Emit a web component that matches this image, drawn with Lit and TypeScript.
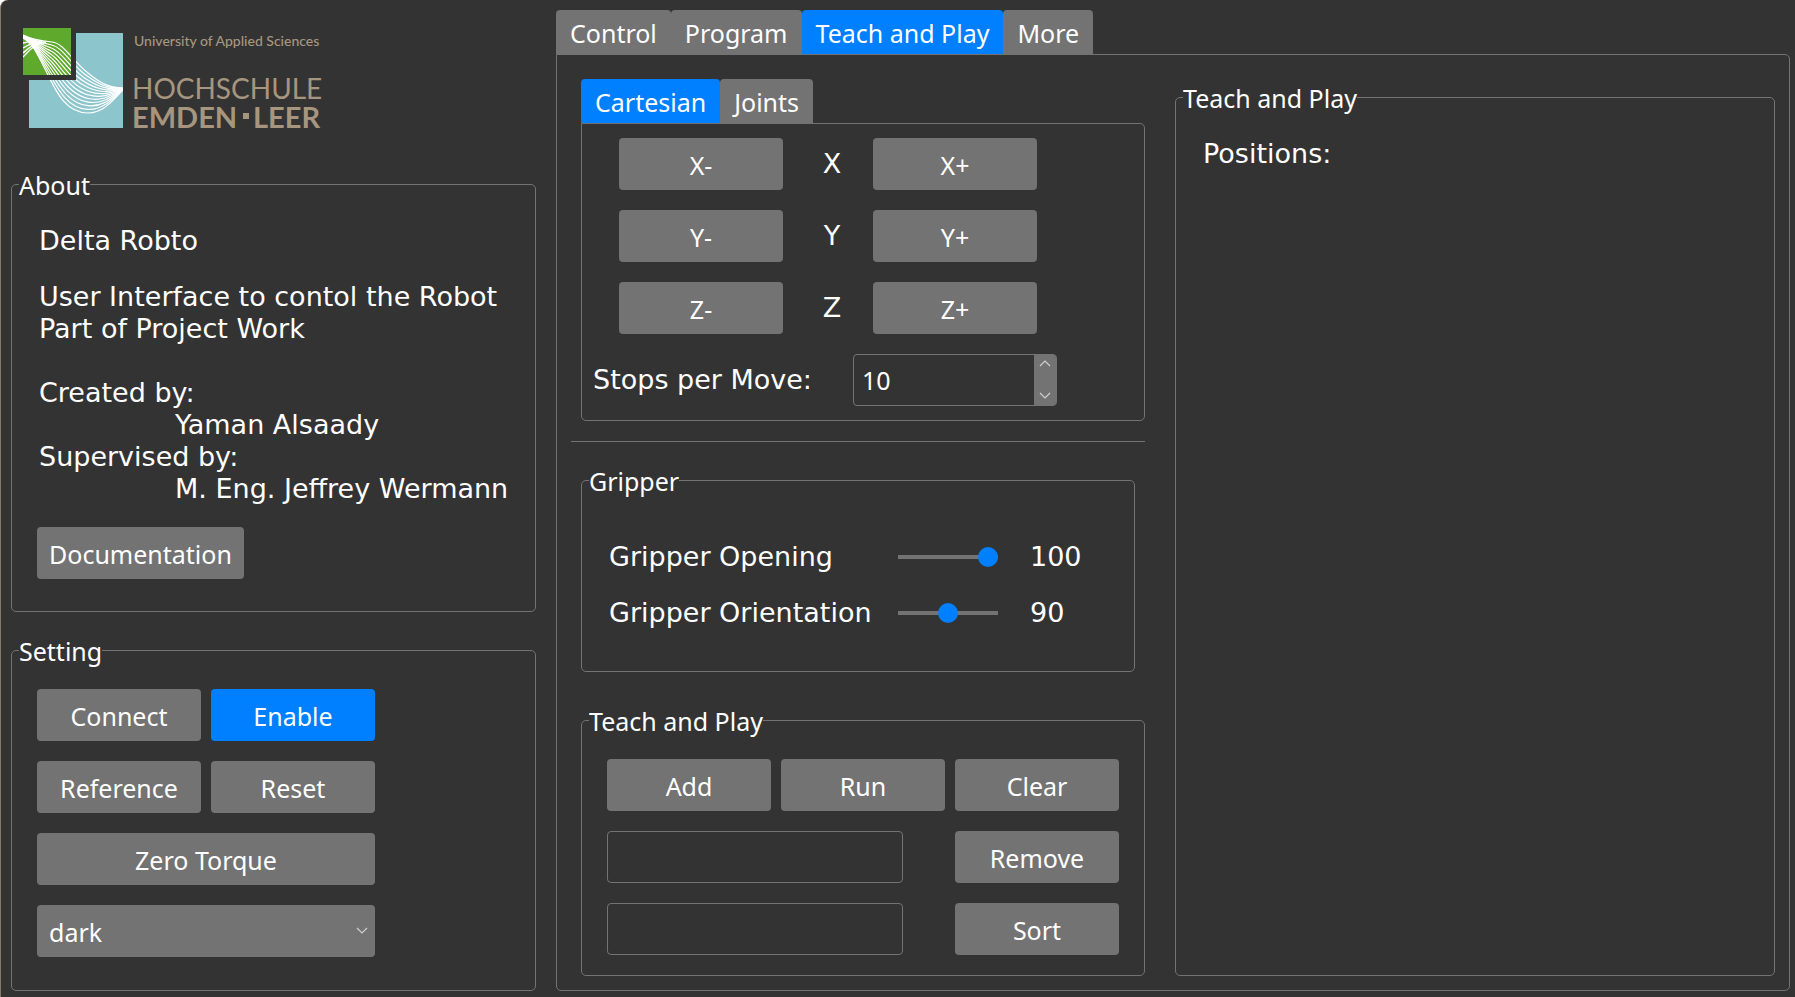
import { LitElement, html, svg, css } from "lit";
import { customElement, state } from "lit/decorators.js";
import { classMap } from "lit/directives/class-map.js";

const shared = css`
  * { box-sizing: border-box; }
  button, select, input, legend {
    font-family: "Noto Sans", "Open Sans", sans-serif;
    font-size: 25px;
    color: #fff;
  }
  button {
    height: 52px;
    padding: 2px 12px 0;
    border: 0;
    border-radius: 4px;
    background: #737373;
    cursor: pointer;
  }
  button.active { background: #007fff; }
`;

type Pt = [number, number];

const UPPER_WAVE: Pt[] = [[23, 35], [33, 40], [42, 41], [52, 42], [64, 43], [72, 61], [88, 73], [99, 82], [108, 88], [123, 88]];
const LOWER_WAVE: Pt[] = [[23, 38], [33, 42], [40, 60], [48, 75], [55, 89], [65, 113], [88, 113], [104, 113], [114, 99], [123, 90]];
const WAVE_COUNT = 12;

/** Blends the two outer waves of the logo into one of the lines between them. */
function wavePath(index: number): string {
  const t = index / (WAVE_COUNT - 1);
  const p = UPPER_WAVE.map(([x, y], i) => {
    const [lx, ly] = LOWER_WAVE[i];
    return `${(x + (lx - x) * t).toFixed(1)} ${(y + (ly - y) * t).toFixed(1)}`;
  });
  return `M${p[0]}C${p.slice(1).join(" ")}`;
}

@customElement("school-logo")
export class SchoolLogo extends LitElement {
  static styles = css`
    :host { display: block; }
    svg { display: block; }
    text { fill: #a7967f; font-family: Lato, "Open Sans", sans-serif; }
    .small { font-size: 14px; font-weight: 500; }
    .name { font-size: 28px; }
    .place { font-size: 29px; font-weight: bold; }
  `;

  render() {
    return html`
      <svg width="330" height="110" viewBox="23 28 330 110" role="img" aria-label="Hochschule Emden-Leer">
        <defs>
          <clipPath id="fields">
            <path d="M23 28H71V75H23ZM76 33H123V128H29V80H76Z" />
          </clipPath>
        </defs>
        <rect x="23" y="28" width="48" height="47" fill="#5fa92d" />
        <path d="M76 33H123V128H29V80H76Z" fill="#8cc5cc" />
        <g clip-path="url(#fields)" fill="none" stroke="#fff" stroke-width="1.2">
          ${Array.from({ length: WAVE_COUNT }, (_, i) => svg`<path d=${wavePath(i)} />`)}
          <path d="M23 57C30 50 34 44 46 42M23 53C29 48 34 43 44 42M23 48C28 45 33 42 42 41M23 43C28 42 33 41 40 41" stroke-width="1.4" />
        </g>
        <text class="small" x="134" y="46">University of Applied Sciences</text>
        <text class="name" x="132" y="99">HOCHSCHULE</text>
        <text class="place" x="132" y="128">EMDEN</text>
        <rect x="243" y="113" width="6" height="6" fill="#a7967f" />
        <text class="place" x="253" y="128">LEER</text>
      </svg>
    `;
  }
}

@customElement("spin-box")
export class SpinBox extends LitElement {
  static styles = [shared, css`
    :host { display: block; }
    .box {
      display: flex;
      height: 52px;
      border: 1px solid #737373;
      border-radius: 4px;
      overflow: hidden;
    }
    input {
      flex: 1;
      min-width: 0;
      padding: 0 8px;
      border: 0;
      outline: 0;
      background: none;
      appearance: textfield;
    }
    input::-webkit-inner-spin-button { appearance: none; margin: 0; }
    .steps { display: flex; flex-direction: column; width: 22px; background: #737373; }
    .steps button {
      flex: 1;
      height: auto;
      padding: 0;
      border-radius: 0;
      display: flex;
      justify-content: center;
      align-items: center;
    }
    .steps button:first-child { align-items: flex-start; padding-top: 5px; }
    .steps button:last-child { align-items: flex-end; padding-bottom: 6px; }
    path { fill: none; stroke: #d0d0d0; stroke-width: 1.2; }
  `];

  @state() private value = 10;

  render() {
    return html`
      <div class="box">
        <input type="number" aria-label="Stops per Move" .value=${String(this.value)}
          @input=${(e: Event) => (this.value = Number((e.target as HTMLInputElement).value))} />
        <div class="steps">
          <button aria-label="Increase" @click=${() => this.value++}>
            <svg width="12" height="7"><path d="M1 6L6 1L11 6" /></svg>
          </button>
          <button aria-label="Decrease" @click=${() => this.value--}>
            <svg width="12" height="7"><path d="M1 1L6 6L11 1" /></svg>
          </button>
        </div>
      </div>
    `;
  }
}

@customElement("app-root")
export class AppRoot extends LitElement {
  static styles = [shared, css`
    :host {
      display: grid;
      grid-template-columns: 525px minmax(0, 1fr);
      gap: 20px;
      box-sizing: border-box;
      min-height: 100vh;
      padding: 10px 5px 6px 10px;
      border-left: 1px solid #857869;
      border-top-left-radius: 8px;
      background: #333;
      color: #fff;
      font-family: "DejaVu Sans", sans-serif;
      font-size: 27px;
      line-height: 32px;
    }
    p, h1 { margin: 0; font-size: inherit; font-weight: normal; white-space: nowrap; }
    fieldset {
      min-width: 0;
      margin: 0;
      border: 1px solid #737373;
      border-radius: 5px;
      padding: 22px 25px 32px;
    }
    legend { margin-left: -18px; padding: 2px 0 0; line-height: 32px; }

    .side { display: flex; flex-direction: column; }
    .logo { padding: 18px 0 29px 12px; }
    .about { margin-bottom: 21px; padding-top: 24px; }
    .about p, .about h1 { padding-left: 2px; }
    .about h1 { margin-bottom: 24px; }
    .details { margin-bottom: 22px; }
    .about .blank { height: 32px; }
    .about .person { padding-left: 138px; }
    .about button { display: block; }
    .setting { flex: 1; }
    .actions {
      display: grid;
      grid-template-columns: repeat(2, 164px);
      gap: 20px 10px;
    }
    .wide { grid-column: span 2; }
    .picker { position: relative; }
    .picker select {
      display: block;
      width: 100%;
      height: 52px;
      padding: 2px 12px 0;
      border: 0;
      border-radius: 4px;
      background: #737373;
      appearance: none;
    }
    .picker svg { position: absolute; right: 7px; top: 22px; pointer-events: none; }
    .picker path { fill: none; stroke: #d0d0d0; stroke-width: 1.2; }

    .main { display: flex; flex-direction: column; min-width: 0; }
    .tabs { display: flex; }
    .tabs button { height: 44px; padding: 2px 14px 0; border-radius: 4px 4px 0 0; }
    .page {
      flex: 1;
      display: grid;
      grid-template-columns: 574px minmax(0, 1fr);
      gap: 30px;
      border: 1px solid #737373;
      border-radius: 0 5px 5px 5px;
      padding: 24px 14px 14px;
    }
    .work { display: flex; flex-direction: column; }
    .motion, .teach { margin-left: 10px; }
    .panel {
      border: 1px solid #737373;
      border-radius: 0 5px 5px 5px;
      padding: 14px 11px;
    }
    .axes {
      display: grid;
      grid-template-columns: 164px 90px 164px;
      gap: 20px 0;
      align-items: center;
      padding-left: 26px;
      text-align: center;
    }
    .axes span { padding-left: 8px; }
    .stops {
      display: flex;
      align-items: center;
      margin-top: 20px;
    }
    .stops span { width: 260px; white-space: nowrap; }
    .stops spin-box { width: 204px; }
    hr { width: 100%; margin: 20px 0 21px; border: 0; border-top: 1px solid #737373; }
    .gripper {
      display: grid;
      grid-template-columns: 289px 100px 1fr;
      row-gap: 24px;
      align-items: center;
      margin: 0 10px 31px;
      padding: 44px 27px 42px;
      white-space: nowrap;
    }
    .gripper legend { margin-left: -20px; }
    .gripper output { padding-left: 32px; }
    input[type="range"] {
      appearance: none;
      width: 100%;
      height: 20px;
      margin: 0;
      background: none;
    }
    input[type="range"]::-webkit-slider-runnable-track { height: 4px; background: #737373; }
    input[type="range"]::-webkit-slider-thumb {
      appearance: none;
      width: 20px;
      height: 20px;
      margin-top: -8px;
      border-radius: 50%;
      background: #007fff;
    }
    .teach {
      flex: 1;
      display: grid;
      grid-template-columns: repeat(3, 164px);
      align-content: start;
      gap: 20px 10px;
      padding-bottom: 20px;
    }
    .field { grid-column: span 2; }
    .field input {
      display: block;
      width: 296px;
      height: 52px;
      padding: 0 8px;
      border: 1px solid #737373;
      border-radius: 4px;
      background: none;
    }
    .positions { margin-top: 1px; padding-top: 24px; }
    .positions p { padding-left: 2px; }
  `];

  @state() private page = "Teach and Play";
  @state() private mode = "Cartesian";
  @state() private opening = 100;
  @state() private orientation = 90;

  private tabs(names: string[], current: string, pick: (name: string) => void) {
    return html`
      <div class="tabs" role="tablist">
        ${names.map((name) => html`
          <button role="tab" aria-selected=${name === current} class=${classMap({ active: name === current })}
            @click=${() => pick(name)}>${name}</button>`)}
      </div>
    `;
  }

  render() {
    return html`
      <div class="side">
        <school-logo class="logo"></school-logo>
        <fieldset class="about">
          <legend>About</legend>
          <h1>Delta Robto</h1>
          <div class="details">
            <p>User Interface to contol the Robot</p>
            <p>Part of Project Work</p>
            <p class="blank"></p>
            <p>Created by:</p>
            <p class="person">Yaman Alsaady</p>
            <p>Supervised by:</p>
            <p class="person">M. Eng. Jeffrey Wermann</p>
          </div>
          <button>Documentation</button>
        </fieldset>
        <fieldset class="setting">
          <legend>Setting</legend>
          <div class="actions">
            <button>Connect</button>
            <button class="active">Enable</button>
            <button>Reference</button>
            <button>Reset</button>
            <button class="wide">Zero Torque</button>
            <div class="wide picker">
              <select aria-label="Theme">
                <option>dark</option>
                <option>light</option>
              </select>
              <svg width="12" height="7"><path d="M1 1L6 6L11 1" /></svg>
            </div>
          </div>
        </fieldset>
      </div>

      <div class="main">
        ${this.tabs(["Control", "Program", "Teach and Play", "More"], this.page, (n) => (this.page = n))}
        <div class="page">
          <div class="work">
            <div class="motion">
              ${this.tabs(["Cartesian", "Joints"], this.mode, (n) => (this.mode = n))}
              <div class="panel">
                <div class="axes">
                  ${["X", "Y", "Z"].map((axis) => html`
                    <button>${axis}-</button><span>${axis}</span><button>${axis}+</button>`)}
                </div>
                <div class="stops">
                  <span>Stops per Move:</span>
                  <spin-box></spin-box>
                </div>
              </div>
            </div>
            <hr />
            <fieldset class="gripper">
              <legend>Gripper</legend>
              <label for="opening">Gripper Opening</label>
              <input id="opening" type="range" min="0" max="100" .value=${String(this.opening)}
                @input=${(e: Event) => (this.opening = Number((e.target as HTMLInputElement).value))} />
              <output for="opening">${this.opening}</output>
              <label for="orientation">Gripper Orientation</label>
              <input id="orientation" type="range" min="0" max="180" .value=${String(this.orientation)}
                @input=${(e: Event) => (this.orientation = Number((e.target as HTMLInputElement).value))} />
              <output for="orientation">${this.orientation}</output>
            </fieldset>
            <fieldset class="teach">
              <legend>Teach and Play</legend>
              <button>Add</button>
              <button>Run</button>
              <button>Clear</button>
              <div class="field"><input type="text" aria-label="Position to remove" /></div>
              <button>Remove</button>
              <div class="field"><input type="text" aria-label="Sort order" /></div>
              <button>Sort</button>
            </fieldset>
          </div>
          <fieldset class="positions">
            <legend>Teach and Play</legend>
            <p>Positions:</p>
          </fieldset>
        </div>
      </div>
    `;
  }
}
